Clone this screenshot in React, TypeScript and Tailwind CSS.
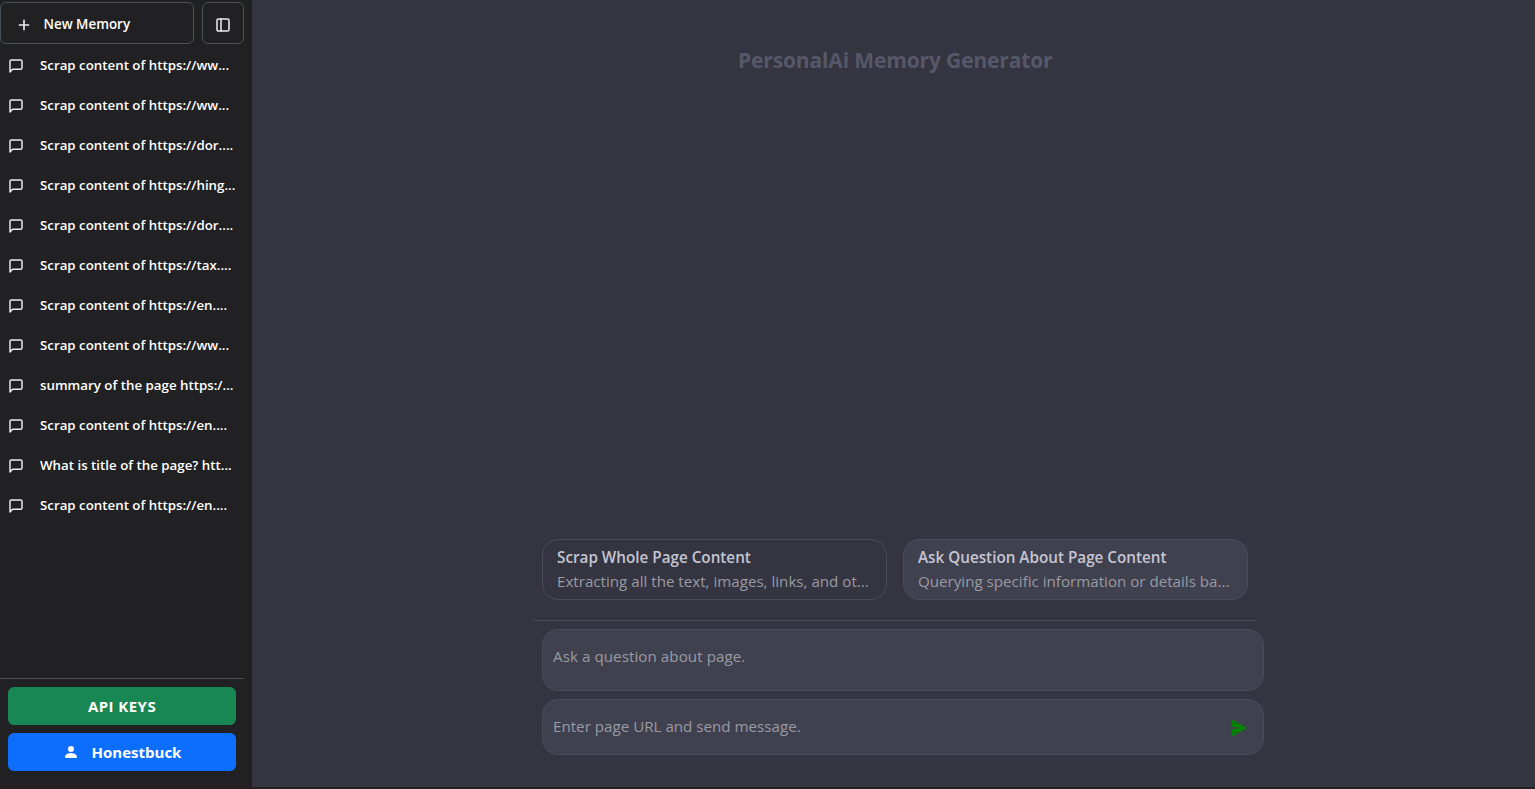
import type { ReactNode } from "react";
import { BsPersonFill } from "react-icons/bs";
import { FiMessageSquare, FiPlus, FiSidebar } from "react-icons/fi";

const MEMORIES = [
  { id: 1, title: "Scrap content of https://ww..." },
  { id: 2, title: "Scrap content of https://ww..." },
  { id: 3, title: "Scrap content of https://dor...." },
  { id: 4, title: "Scrap content of https://hing..." },
  { id: 5, title: "Scrap content of https://dor...." },
  { id: 6, title: "Scrap content of https://tax...." },
  { id: 7, title: "Scrap content of https://en...." },
  { id: 8, title: "Scrap content of https://ww..." },
  { id: 9, title: "summary of the page https:/..." },
  { id: 10, title: "Scrap content of https://en...." },
  { id: 11, title: "What is title of the page? htt..." },
  { id: 12, title: "Scrap content of https://en...." },
];

function Sidebar() {
  return (
    <aside className="flex w-[252px] shrink-0 flex-col bg-[#212123] pr-2 text-white">
      <div className="flex gap-2 pt-0.5">
        <button className="flex h-[42px] w-[194px] items-center gap-[11.5px] rounded-md border border-[#495057] pt-[3px] pl-[15px] text-[13.4px] font-semibold">
          <FiPlus className="h-4 w-4 text-[#ececf1]" strokeWidth={2.4} />
          <span>New Memory</span>
        </button>
        <button
          aria-label="Toggle sidebar"
          className="flex h-[42px] w-[42px] items-center justify-center rounded-md border border-[#495057] pt-[3px]"
        >
          <FiSidebar className="h-4 w-4 text-[#ececf1]" strokeWidth={2.3} />
        </button>
      </div>

      <nav className="flex flex-1 flex-col pt-0.5">
        {MEMORIES.map((memory) => (
          <a key={memory.id} className="flex h-10 items-center gap-4 pl-2 text-[13.3px] font-semibold whitespace-nowrap">
            <FiMessageSquare className="h-4 w-4 shrink-0 text-[#ececf1]" strokeWidth={2.2} />
            <span>{memory.title}</span>
          </a>
        ))}
      </nav>

      <div className="flex flex-col gap-2 border-t border-[#4d4d4f] px-2 pt-2 pb-4">
        <button className="h-[38px] rounded-md bg-[#198754] text-[15px] font-bold tracking-[0.45px]">API KEYS</button>
        <button className="flex h-[38px] items-center justify-center gap-[13px] rounded-md bg-[#0d6efd] text-[15px] font-bold">
          <BsPersonFill className="h-4 w-4" />
          <span>Honestbuck</span>
        </button>
      </div>
    </aside>
  );
}

type SuggestionProps = {
  title: ReactNode;
  description: ReactNode;
  active?: boolean;
};

function Suggestion({ title, description, active }: SuggestionProps) {
  return (
    <button
      className={`flex h-[61px] w-[345px] flex-col justify-center rounded-2xl border border-[#4c4b5b] pb-0.5 pl-3.5 text-left leading-6 whitespace-nowrap ${
        active ? "bg-[#40414f]" : ""
      }`}
    >
      <span className="text-[15.25px] font-semibold text-[#c5c5d2]">{title}</span>
      <span className="text-[15.15px] text-[#9a9aa2]">{description}</span>
    </button>
  );
}

export default function App() {
  return (
    <div className="flex h-[789px] w-full flex-col overflow-hidden bg-[#231f23] font-['Open_Sans','Noto_Sans',sans-serif]">
      <div className="flex h-[787px]">
        <Sidebar />
        <main className="flex flex-1 flex-col bg-[#343541]">
          <h1 className="mt-11 ml-[486px] text-[21px] leading-8 font-bold tracking-[-0.14px] text-[#565869]">
            PersonalAi Memory Generator
          </h1>

          <div className="mt-auto mb-8 ml-[282px] w-[730px]">
            <div className="flex gap-4 pl-2">
              <Suggestion
                title="Scrap Whole Page Content"
                description="Extracting all the text, images, links, and ot..."
              />
              <Suggestion
                active
                title="Ask Question About Page Content"
                description="Querying specific information or details ba..."
              />
            </div>

            <div className="mt-5 h-px w-[722px] bg-[#4c4b5b]" />

            <div className="mt-2 ml-2 flex flex-col gap-2 text-[15.17px] leading-6 text-[#9a9aa2]">
              <div className="h-[62px] rounded-2xl border border-[#4c4b5b] bg-[#40414f] pt-3.5 pl-2.5 tracking-[0.06px]">
                Ask a question about page.
              </div>
              <div className="flex h-14 items-start justify-between rounded-2xl border border-[#4c4b5b] bg-[#40414f] pt-3.5 pr-4 pl-2.5">
                <span>Enter page URL and send message.</span>
                <svg className="mt-1.5 h-4 w-4 text-[#008000]" viewBox="0 0 16 16" fill="currentColor">
                  <path d="M.5 1.163A1 1 0 0 1 1.97.28l12.868 6.837a1 1 0 0 1 0 1.766L1.969 15.72A1 1 0 0 1 .5 14.836V10.33a1 1 0 0 1 .816-.983L8.5 8 1.316 6.653A1 1 0 0 1 .5 5.67V1.163Z" />
                </svg>
              </div>
            </div>
          </div>
        </main>
      </div>
    </div>
  );
}
